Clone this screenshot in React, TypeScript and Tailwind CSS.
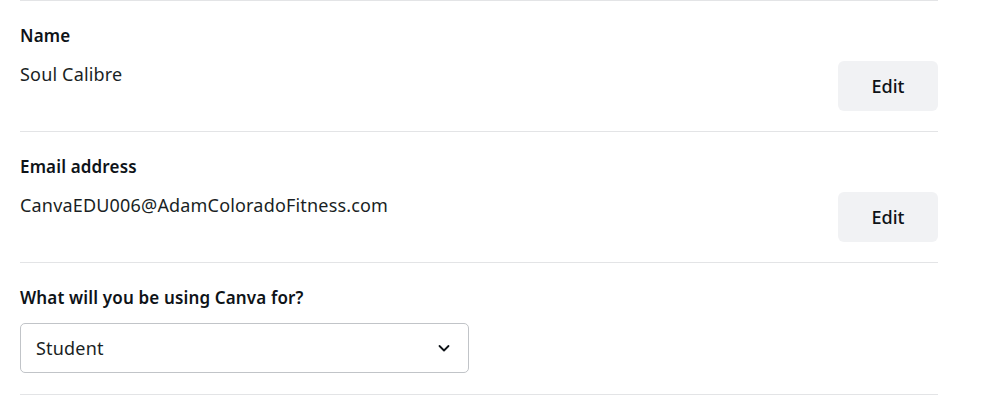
import React from "react";

function Row({ label, value }: { label: string; value: string }) {
  return (
    <div className="border-t border-[#e3e4e6] pt-[23px] pb-[20px]">
      <div className="text-[17px] leading-[24px] font-semibold tracking-[0.15px] text-[#0e1318]">{label}</div>
      <div className="mt-[13px] flex items-start justify-between">
        <div className="text-[18px] leading-[26px] tracking-[0.18px] text-[#1a1f24]">{value}</div>
        <button className="h-[50px] w-[100px] rounded-[6px] bg-[#f1f2f4] text-[18px] font-medium text-[#0e1318]">
          Edit
        </button>
      </div>
    </div>
  );
}

export default function App() {
  return (
    <div
      className="w-[1007px] h-[407px] bg-white"
      style={{ fontFamily: '"Noto Sans", sans-serif' }}
    >
      <div className="ml-[20px] w-[918px]">
        <Row label="Name" value="Soul Calibre" />
        <Row label="Email address" value="CanvaEDU006@AdamColoradoFitness.com" />
        <div className="border-t border-b border-[#e3e4e6] pt-[23px] pb-[21px]">
          <div className="text-[17px] leading-[24px] font-semibold tracking-[0.15px] text-[#0e1318]">
            What will you be using Canva for?
          </div>
          <div className="mt-[13px] flex h-[50px] w-[449px] items-center justify-between rounded-[5px] border border-[#c1c4c8] pl-[15px] pr-[16px]">
            <span className="text-[18px] tracking-[0.18px] text-[#1a1f24]">Student</span>
            <svg width="16" height="16" viewBox="0 0 16 16" fill="none">
              <path d="M3.5 6l4.5 4.5L12.5 6" stroke="#0e1318" strokeWidth="1.8" strokeLinecap="round" strokeLinejoin="round" />
            </svg>
          </div>
        </div>
      </div>
    </div>
  );
}
